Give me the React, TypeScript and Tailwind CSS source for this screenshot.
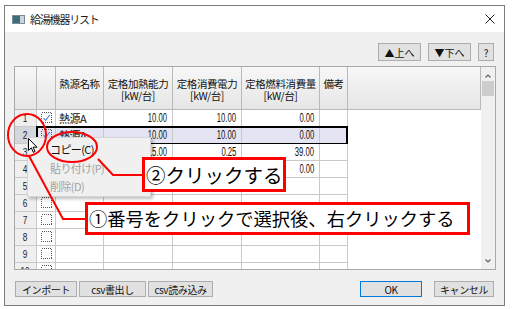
import React from 'react';

type Row = {
  n: number;
  check?: boolean;
  name?: string;
  a?: string;
  b?: string;
  c?: string;
  sel?: boolean;
};

// rows 3-5 are mostly hidden behind the context menu and the callout
const rows: Row[] = [
  { n: 1, check: true, name: '熱源A', a: '10.00', b: '10.00', c: '0.00' },
  { n: 2, check: true, name: '熱源A', a: '10.00', b: '10.00', c: '0.00', sel: true },
  { n: 3, a: '15.00', b: '0.25', c: '39.00' },
  { n: 4, c: '0.00' },
  { n: 5 },
  { n: 6 },
  { n: 7 },
  { n: 8 },
  { n: 9 },
  { n: 10 },
];

const jp = "font-['Noto_Sans_CJK_JP','Noto_Sans',sans-serif]";

const CheckBox = ({ checked }: { checked?: boolean }) => (
  <svg width="12" height="12" viewBox="0 0 12 12" className="block" shapeRendering="crispEdges">
    <rect x="0.5" y="0.5" width="10" height="10" fill="none" stroke="#555" strokeDasharray="1 1" />
    {checked && (
      <path
        d="M2.5 6.2 L4.6 8.3 L8.8 3"
        fill="none"
        stroke="#4f86d4"
        strokeWidth="1.2"
        shapeRendering="geometricPrecision"
      />
    )}
  </svg>
);

const Num = ({ v }: { v?: string }) => (
  <div className="flex-1 h-full flex items-center justify-end pr-[5px] overflow-hidden">
    {v && (
      <span className="inline-block origin-right scale-x-[0.64] font-['Liberation_Sans',sans-serif] text-[12px] leading-none text-[#111]">
        {v}
      </span>
    )}
  </div>
);

const HeadCell = ({ w, lines }: { w: string; lines: string[] }) => (
  <div className={`${w} h-full shrink-0 border-r border-[#b9b9b9] flex flex-col items-center pt-[11px] text-[10.5px] leading-[12px] tracking-[-0.4px] text-[#111]`}>
    {lines.map((l) => (
      <span key={l}>{l}</span>
    ))}
  </div>
);

function Grid() {
  return (
    <div className="flex h-[204px] border border-[#a8a8a8] bg-white">
      <div className="w-[466px] h-full overflow-hidden">
        {/* header */}
        <div className="flex h-[43px] border-b border-[#b9b9b9] bg-gradient-to-b from-[#f7f7f7] to-[#e6e6e6]">
          <div className="w-[22px] h-full shrink-0 border-r border-[#b9b9b9]" />
          <div className="w-[19px] h-full shrink-0 border-r border-[#b9b9b9]" />
          <HeadCell w="w-[48px]" lines={['熱源名称']} />
          <HeadCell w="w-[69px]" lines={['定格加熱能力', '[kW/台]']} />
          <HeadCell w="w-[69px]" lines={['定格消費電力', '[kW/台]']} />
          <HeadCell w="w-[78px]" lines={['定格燃料消費量', '[kW/台]']} />
          <HeadCell w="w-[28px]" lines={['備考']} />
          <div className="flex-1 h-full border-r border-[#b9b9b9]" />
        </div>
        {/* rows */}
        {rows.map((r) => (
          <div key={r.n} className="flex h-[17px]">
            <div
              className={`w-[22px] h-full shrink-0 border-r border-b border-[#c9c9c9] flex items-center justify-center font-['Liberation_Sans',sans-serif] text-[11px] text-[#222] ${
                r.sel ? 'bg-[#d3d6dd]' : 'bg-[#efefef]'
              }`}
            >
              <span className="inline-block scale-x-[0.75]">{r.n}</span>
            </div>
            <div className={`relative flex h-full w-[311px] shrink-0 ${r.sel ? 'bg-[#e4e4f2]' : 'bg-white'}`}>
              <div className="w-[19px] h-full shrink-0 border-r border-b border-[#c9c9c9] flex items-center pl-[4px]">
                <CheckBox checked={r.check} />
              </div>
              <div className="w-[48px] h-full shrink-0 border-r border-b border-[#c9c9c9] flex items-center pl-[3px] text-[11px] tracking-[-0.5px] text-[#111] overflow-hidden whitespace-nowrap">
                {r.name}
              </div>
              <div className="w-[69px] h-full shrink-0 border-r border-b border-[#c9c9c9] flex">
                <Num v={r.a} />
              </div>
              <div className="w-[69px] h-full shrink-0 border-r border-b border-[#c9c9c9] flex">
                <Num v={r.b} />
              </div>
              <div className="w-[78px] h-full shrink-0 border-r border-b border-[#c9c9c9] flex">
                <Num v={r.c} />
              </div>
              <div className="w-[28px] h-full shrink-0 border-r border-b border-[#c9c9c9]" />
              {r.sel && <div className="absolute -top-[1px] -bottom-[1px] -left-[1px] right-0 border-2 border-black pointer-events-none" />}
            </div>
          </div>
        ))}
      </div>
      {/* scrollbar */}
      <div className="w-[14px] h-full bg-[#f0f0f0] flex flex-col items-center">
        <svg width="8" height="8" viewBox="0 0 8 8" className="mt-[5px]">
          <path d="M1.5 5.5 L4 3 L6.5 5.5" fill="none" stroke="#606060" strokeWidth="1.2" />
        </svg>
        <div className="mt-[1px] w-[12px] h-[15px] bg-[#cdcdcd]" />
        <div className="flex-1" />
        <svg width="8" height="8" viewBox="0 0 8 8" className="mb-[4px]">
          <path d="M1.5 2.5 L4 5 L6.5 2.5" fill="none" stroke="#606060" strokeWidth="1.2" />
        </svg>
      </div>
    </div>
  );
}

const Btn = ({ w, children, primary }: { w: string; children: React.ReactNode; primary?: boolean }) => (
  <div
    className={`${w} h-[16px] flex items-center justify-center bg-[#e1e1e1] border text-[10px] tracking-[-0.4px] text-[#111] ${
      primary ? 'border-[#0078d7]' : 'border-[#adadad]'
    }`}
  >
    {children}
  </div>
);

export default function App() {
  return (
    <div className={`relative w-[513px] h-[309px] bg-white overflow-hidden ${jp}`}>
      <div className="ml-[4px] mt-[5px] w-[501px] h-[301px] border border-[#7c7c7c] flex flex-col bg-[#f0f0f0]">
        {/* title bar */}
        <div className="h-[26px] bg-white flex items-center pl-[7px] pr-[9px]">
          <div className="w-[13px] h-[9px] border border-[#7a8a96] flex">
            <div className="w-[7px] h-full bg-[#3d6d7c]" />
            <div className="flex-1 bg-[#c9d6de]" />
          </div>
          <span className="ml-[5px] text-[11px] tracking-[-1.2px] text-[#1a1a1a]">給湯機器リスト</span>
          <div className="flex-1" />
          <svg width="10" height="10" viewBox="0 0 10 10">
            <path d="M0.5 0.5 L9.5 9.5 M9.5 0.5 L0.5 9.5" stroke="#222" strokeWidth="1" />
          </svg>
        </div>

        {/* body */}
        <div className="flex-1 flex flex-col pl-[9px] pr-[8px]">
          <div className="flex justify-end gap-[7px] pt-[11px] pr-[2px]">
            <div className="w-[43px] h-[18px] flex items-center justify-center bg-[#e1e1e1] border border-[#adadad] text-[10px] text-[#111]">
              ▲上へ
            </div>
            <div className="w-[43px] h-[18px] flex items-center justify-center bg-[#e1e1e1] border border-[#adadad] text-[10px] text-[#111]">
              ▼下へ
            </div>
            <div className="w-[16px] h-[18px] flex items-center justify-center bg-[#e1e1e1] border border-[#adadad] text-[10px] text-[#111]">
              ?
            </div>
          </div>
          <div className="mt-[5px]">
            <Grid />
          </div>
          <div className="flex items-center mt-[11px] pl-[1px] pr-[2px]">
            <div className="flex gap-[2px]">
              <Btn w="w-[62px]">インポート</Btn>
              <Btn w="w-[67px]">csv書出し</Btn>
              <Btn w="w-[65px]">csv読み込み</Btn>
            </div>
            <div className="flex-1" />
            <div className="flex gap-[12px]">
              <Btn w="w-[62px]" primary>
                OK
              </Btn>
              <Btn w="w-[60px]">キャンセル</Btn>
            </div>
          </div>
        </div>
      </div>

      {/* context menu */}
      <div className="absolute left-[27px] top-[137px] w-[124px] h-[60px] bg-[#f0f0f0] border border-[#d6d6d6] shadow-[2px_2px_3px_rgba(0,0,0,0.25)] flex flex-col pl-[22px] pt-[2px] text-[11px] tracking-[-0.6px]">
        <div className="h-[19px] flex items-center text-[#111]">コピー(C)</div>
        <div className="h-[19px] flex items-center text-[#a2a2a2]">貼り付け(P)</div>
        <div className="h-[19px] flex items-center text-[#a2a2a2]">削除(D)</div>
      </div>

      {/* callouts */}
      <div className="absolute left-[142px] top-[157px] w-[144px] h-[35px] bg-white border-[3px] border-[#ff0000] flex items-center pl-[1px] text-[19.5px] leading-none text-black whitespace-nowrap">
        ②クリックする
      </div>
      <div className="absolute left-[85px] top-[202px] w-[385px] h-[33px] bg-white border-[3px] border-[#ff0000] flex items-center pl-[1px] text-[18.3px] leading-none text-black whitespace-nowrap">
        ①番号をクリックで選択後、右クリックする
      </div>

      {/* annotation strokes */}
      <svg className="absolute left-0 top-0 pointer-events-none" width="513" height="309" viewBox="0 0 513 309">
        <ellipse cx="27" cy="135" rx="19" ry="21" fill="none" stroke="#ff0000" strokeWidth="2" />
        <ellipse cx="72" cy="147" rx="25" ry="15" fill="none" stroke="#ff0000" strokeWidth="2" />
        <polyline points="29,156 63,219 85,219" fill="none" stroke="#ff0000" strokeWidth="2" />
        <polyline points="98,159 113,175 142,175" fill="none" stroke="#ff0000" strokeWidth="2" />
        {/* cursor */}
        <path
          d="M28.5 138.5 L28.5 150.5 L31.3 147.8 L33.3 152.3 L35 151.5 L33.1 147.2 L37 147.2 Z"
          fill="#fff"
          stroke="#000"
          strokeWidth="1"
          strokeLinejoin="round"
        />
      </svg>
    </div>
  );
}
